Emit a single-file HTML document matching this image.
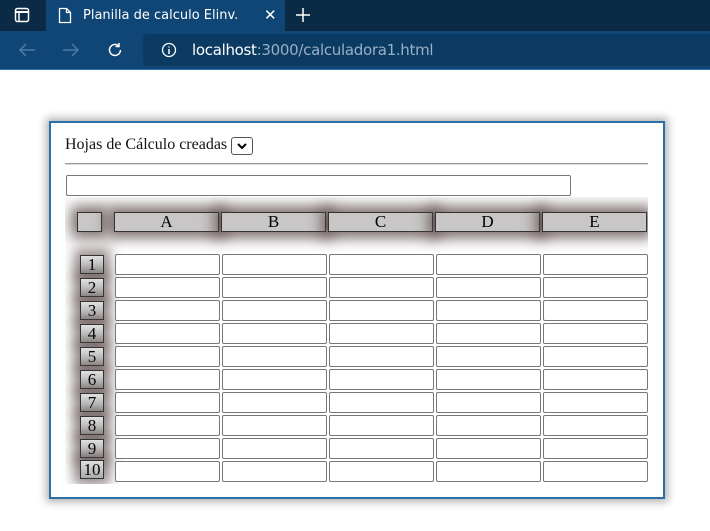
<!DOCTYPE html>
<html><head><meta charset="utf-8"><style>
*{box-sizing:border-box}
body{margin:0;width:710px;height:531px;background:#fff;position:relative;overflow:hidden;font-family:"Liberation Serif",serif}
.a{position:absolute}
.tabbar{left:0;top:0;width:710px;height:31px;background:#0a2a45}
.tab{left:46px;top:0;width:239px;height:31px;background:#0f4676;color:#fff;font:13px "DejaVu Sans",sans-serif}
.tool{left:0;top:31px;width:710px;height:39px;background:#0f4676;border-bottom:1px solid #2a70a8}
.url{left:143px;top:34px;width:567px;height:32px;background:#0b3a62;border-radius:4px 0 0 4px}
.panel{left:49px;top:121px;width:616px;height:378px;border:2px solid #2a6fa8;box-shadow:0 0 8px 3px rgba(0,0,0,.3)}
.hc{background:#c8c6c6;border:1px solid #333;box-shadow:0 0 14px 6px rgba(80,60,60,.75);text-align:center;font-size:17px;line-height:18px;height:20px;top:212px}
.rn{left:80px;width:24px;height:19px;border:1px solid #333;background:linear-gradient(#e0e0e0,#aaa);text-align:center;font-size:17px;line-height:17px;box-shadow:0 0 12px 6px rgba(80,60,60,.6)}
.in{height:21px;width:105px;border:1px solid #777;border-radius:2px;background:#fff}
</style></head><body>
<div class="a tabbar"></div>
<svg class="a" style="left:14px;top:7px" width="16" height="16"><rect x="1.5" y="1.5" width="13" height="13" rx="2" fill="none" stroke="#fff" stroke-width="1.5"/><line x1="1.5" y1="5" x2="14.5" y2="5" stroke="#fff" stroke-width="2"/><line x1="5" y1="5" x2="5" y2="14" stroke="#fff" stroke-width="1.5"/></svg>
<div class="a tab"><svg class="a" style="left:12px;top:7px" width="14" height="17"><path d="M1.5 1.5h7l4 4v10h-11z M8.5 1.5v4h4" fill="none" stroke="#fff" stroke-width="1.3"/></svg><span class="a" style="left:37px;top:8px">Planilla de calculo Elinv.</span><span class="a" style="left:218px;top:6px;font-size:15px">✕</span></div>
<svg class="a" style="left:295px;top:7px" width="16" height="16"><path d="M8 1v14M1 8h14" stroke="#fff" stroke-width="1.5"/></svg>
<div class="a tool"></div>
<svg class="a" style="left:18px;top:42px" width="18" height="16"><path d="M17 8H2M8 2L2 8l6 6" fill="none" stroke="#4f7aa3" stroke-width="1.5"/></svg>
<svg class="a" style="left:62px;top:42px" width="18" height="16"><path d="M1 8h15M10 2l6 6-6 6" fill="none" stroke="#4f7aa3" stroke-width="1.5"/></svg>
<svg class="a" style="left:106px;top:41px" width="18" height="18"><path d="M14.5 9a5.5 5.5 0 1 1-2-4.3M13 2v3.5h-3.5" fill="none" stroke="#fff" stroke-width="1.5"/></svg>
<div class="a url"></div>
<svg class="a" style="left:161px;top:42px" width="16" height="16"><circle cx="8" cy="8" r="6.5" fill="none" stroke="#fff" stroke-width="1.3"/><path d="M8 7v5M8 4.5v1" stroke="#fff" stroke-width="1.5"/></svg>
<div class="a" style="left:192px;top:41px;font:15px 'DejaVu Sans',sans-serif;color:#fff;letter-spacing:-0.3px">localhost<span style="color:#9ab0c4">:3000/calculadora1.html</span></div>

<div class="a panel"></div>
<div class="a" style="left:65px;top:136px;font-size:16px;color:#111">Hojas de Cálculo creadas</div>
<div class="a" style="left:231px;top:137px;width:22px;height:18px;border:1px solid #555;border-radius:3px"><svg class="a" style="left:5px;top:5px" width="10" height="7"><path d="M1 1l4 4 4-4" fill="none" stroke="#000" stroke-width="2"/></svg></div>
<div class="a" style="left:65px;top:163px;width:583px;height:2px;border-top:1px solid #999;border-bottom:1px solid #ddd"></div>
<div class="a" style="left:66px;top:175px;width:505px;height:21px;border:1px solid #777;border-radius:2px"></div>

<div class="a" style="left:65px;top:197px;width:583px;height:287px;overflow:hidden">
<div style="position:relative;left:-65px;top:-197px">
<div class="a hc" style="left:77px;width:25px"></div>
<div class="a hc" style="left:114px;width:105px">A</div>
<div class="a hc" style="left:221px;width:105px">B</div>
<div class="a hc" style="left:328px;width:105px">C</div>
<div class="a hc" style="left:435px;width:105px">D</div>
<div class="a hc" style="left:542px;width:105px">E</div>
<div class="a rn" style="top:255px">1</div>
<div class="a rn" style="top:278px">2</div>
<div class="a rn" style="top:301px">3</div>
<div class="a rn" style="top:324px">4</div>
<div class="a rn" style="top:347px">5</div>
<div class="a rn" style="top:370px">6</div>
<div class="a rn" style="top:393px">7</div>
<div class="a rn" style="top:416px">8</div>
<div class="a rn" style="top:439px">9</div>
<div class="a rn" style="top:460px">10</div>
</div></div>
<div id="g"></div>
<script>
var h='',xs=[115,222,329,436,543];
for(var r=0;r<10;r++)for(var c=0;c<5;c++)h+='<div class="a in" style="left:'+xs[c]+'px;top:'+(254+r*23)+'px"></div>';
document.getElementById('g').innerHTML=h;
</script>
</body></html>
